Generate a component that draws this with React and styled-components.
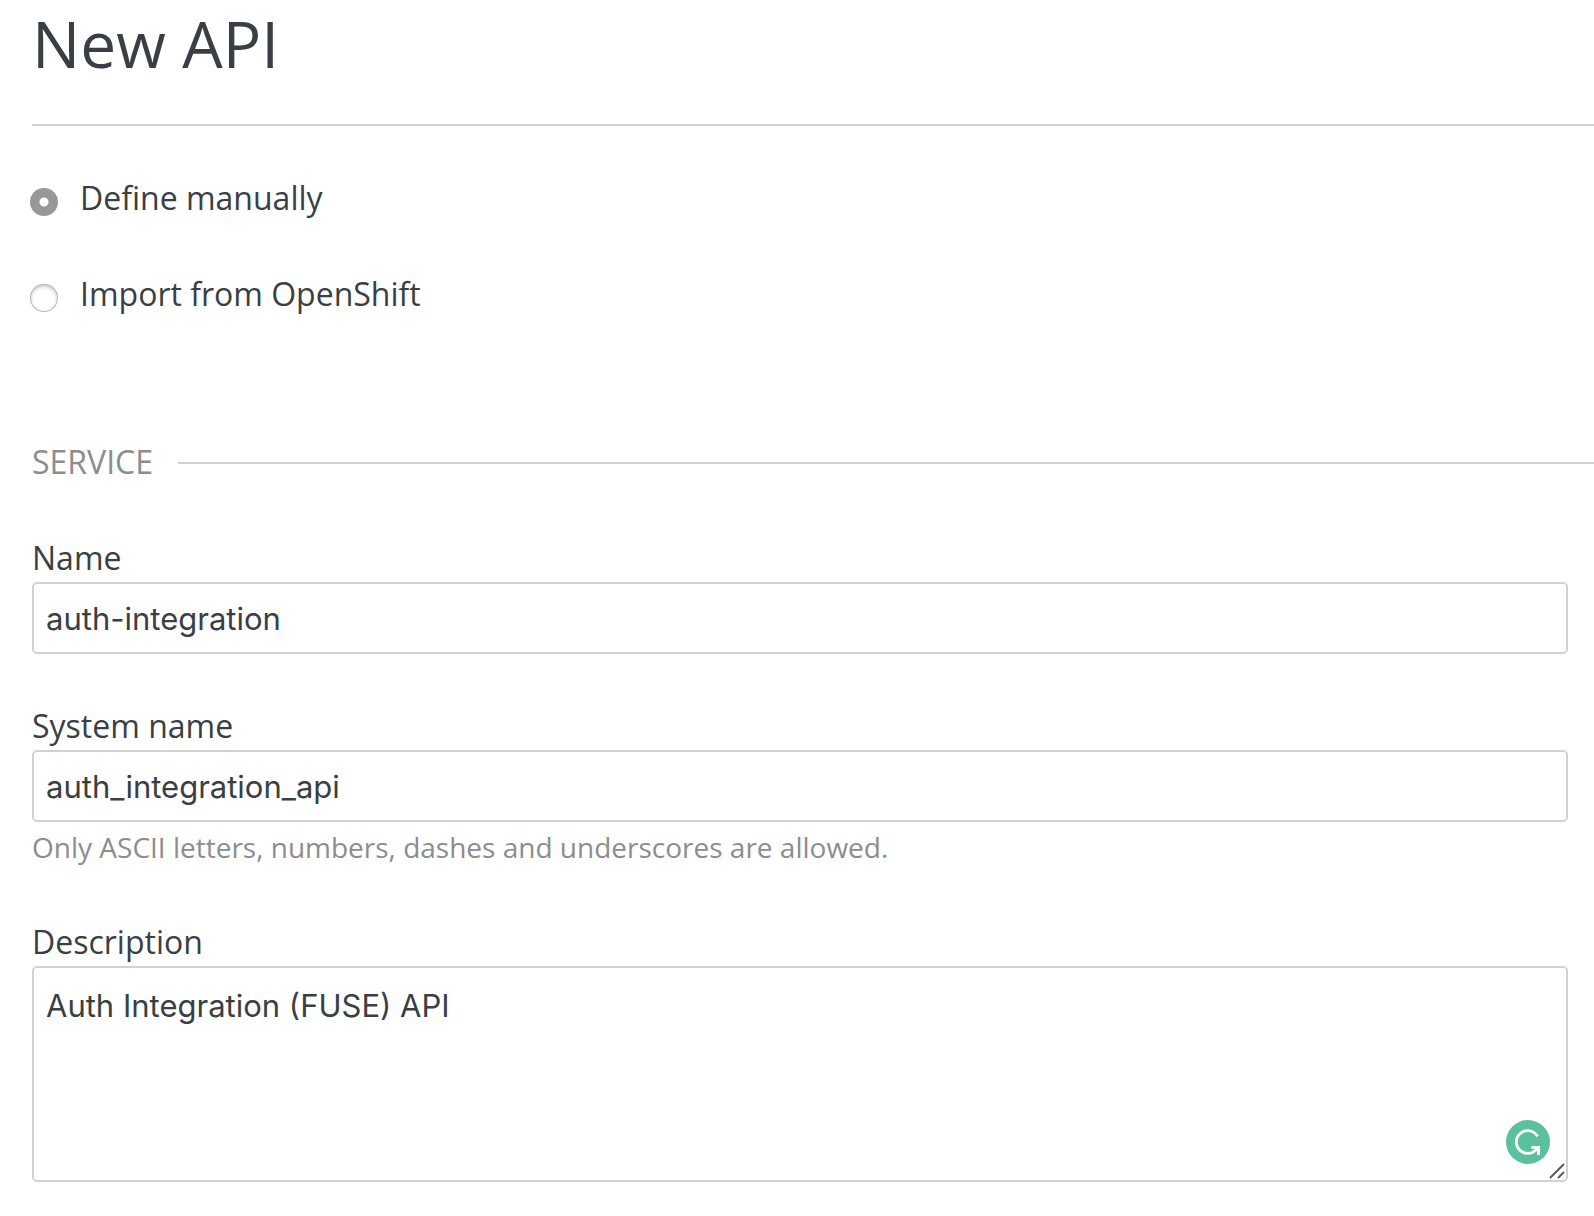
import React, { useState } from "react";
import styled, { createGlobalStyle, css } from "styled-components";

const text = "#393f44";
const muted = "#8b8d8f";
const line = "#d1d1d1";

const GlobalStyle = createGlobalStyle`
  *, *::before, *::after { box-sizing: border-box; }
  body {
    margin: 0;
    background: #fff;
    color: ${text};
    font: 400 32px/48px "Open Sans", "Noto Sans", sans-serif;
  }
`;

const Page = styled.main`
  padding: 0 0 34px 32px;
`;

const Title = styled.h1`
  margin: 0;
  padding-bottom: 36px;
  border-bottom: 2px solid ${line};
  font-size: 64px;
  font-weight: 400;
  line-height: 88px;
`;

const Fieldset = styled.fieldset`
  min-width: 0;
  margin: 0;
  padding: 0;
  border: 0;
`;

const SourceOptions = styled(Fieldset)`
  display: flex;
  flex-direction: column;
  align-items: flex-start;
  gap: 48px;
  padding: 48px 0 120px;
`;

const Option = styled.label`
  display: flex;
  align-items: center;
  gap: 22px;
  margin-left: -2px;
`;

const Radio = styled.input`
  appearance: none;
  flex: none;
  width: 28px;
  height: 28px;
  margin: 8px 0 0;
  border-radius: 50%;
  background: #fff;
  box-shadow: inset 0 0 0 1px #bbb, inset 0 2px 4px rgba(0, 0, 0, 0.25);

  &:checked {
    background: radial-gradient(circle, #fff 0 4px, #98979c 5px);
    box-shadow: none;
  }
`;

const Legend = styled.legend`
  display: flex;
  align-items: center;
  gap: 25px;
  width: 100%;
  padding: 0;
  color: ${muted};
  text-transform: uppercase;

  &::after {
    content: "";
    flex: 1;
    height: 2px;
    margin-top: 2px;
    background: ${line};
  }
`;

const Fields = styled.div`
  display: flex;
  flex-direction: column;
  gap: 48px;
  padding: 48px 26px 0 0;
`;

const Field = styled.div`
  display: flex;
  flex-direction: column;
`;

const control = css`
  display: block;
  width: 100%;
  margin: 0;
  border: 2px solid ${line};
  border-radius: 5px;
  outline: 0;
  background: #fff;
  color: ${text};
  font: 400 31px/48px Inter, Roboto, sans-serif;
`;

const TextInput = styled.input`
  ${control}
  height: 72px;
  padding: 10px 12px;
`;

const TextArea = styled.textarea`
  ${control}
  height: 216px;
  padding: 14px 12px;
  resize: none;
`;

const Hint = styled.p`
  margin: 0;
  padding-top: 2px;
  color: ${muted};
  font-size: 28px;
  line-height: 46px;
`;

const AreaWrap = styled.div`
  position: relative;
`;

const CheckerButton = styled.button`
  position: absolute;
  right: 18px;
  bottom: 18px;
  width: 44px;
  height: 44px;
  padding: 0;
  border: 0;
  border-radius: 50%;
  background: #5bc19c;

  svg { display: block; }
`;

const Grip = styled.svg`
  position: absolute;
  right: 3px;
  bottom: 3px;
  pointer-events: none;
`;

function SourceOption({ value, selected, onSelect, children }) {
  return (
    <Option>
      <Radio
        type="radio"
        name="source"
        value={value}
        checked={selected === value}
        onChange={() => onSelect(value)}
      />
      {children}
    </Option>
  );
}

export default function App() {
  const [source, setSource] = useState("manual");
  return (
    <>
      <GlobalStyle />
      <Page>
        <Title>New API</Title>
        <form>
          <SourceOptions>
            <SourceOption value="manual" selected={source} onSelect={setSource}>
              Define manually
            </SourceOption>
            <SourceOption value="openshift" selected={source} onSelect={setSource}>
              Import from OpenShift
            </SourceOption>
          </SourceOptions>
          <Fieldset>
            <Legend>Service</Legend>
            <Fields>
              <Field>
                <label htmlFor="name">Name</label>
                <TextInput id="name" defaultValue="auth-integration" />
              </Field>
              <Field>
                <label htmlFor="system-name">System name</label>
                <TextInput
                  id="system-name"
                  defaultValue="auth_integration_api"
                  aria-describedby="system-name-hint"
                />
                <Hint id="system-name-hint">
                  Only ASCII letters, numbers, dashes and underscores are allowed.
                </Hint>
              </Field>
              <Field>
                <label htmlFor="description">Description</label>
                <AreaWrap>
                  <TextArea
                    id="description"
                    spellCheck={false}
                    defaultValue="Auth Integration (FUSE) API"
                  />
                  <CheckerButton type="button" aria-label="Check writing">
                    <svg width="44" height="44" viewBox="0 0 44 44" fill="none" stroke="#fff" strokeWidth="2.8">
                      <path d="M31.6 16.4A11.4 11.4 0 1 0 22 33.4C26.5 33.4 29.5 31 32 27.6" />
                      <path d="M25.4 27.3H32.6V35" />
                    </svg>
                  </CheckerButton>
                  <Grip width="16" height="16" viewBox="0 0 16 16" stroke="#555" strokeWidth="1.8" aria-hidden="true">
                    <path d="M1 15L15 1M9 15l6-6" />
                  </Grip>
                </AreaWrap>
              </Field>
            </Fields>
          </Fieldset>
        </form>
      </Page>
    </>
  );
}
